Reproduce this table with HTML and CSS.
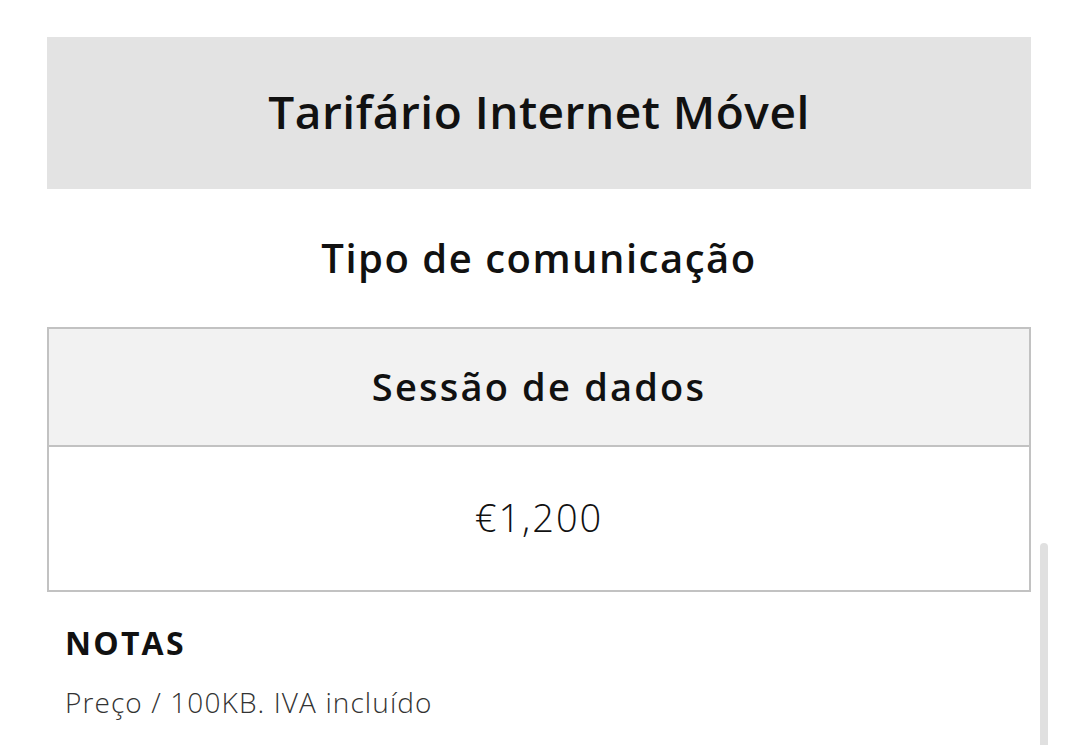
FILE: index.html
```html
<!DOCTYPE html>
<html lang="pt">
<head>
<meta charset="utf-8">
<title>Tarifário Internet Móvel</title>
<link rel="stylesheet" href="styles.css">
</head>
<body>
<main class="page">
  <header class="banner">
    <h1 class="banner-title">Tarifário Internet Móvel</h1>
  </header>
  <h2 class="section-title">Tipo de comunicação</h2>
  <table class="rates">
    <thead>
      <tr><th class="rates-head">Sessão de dados</th></tr>
    </thead>
    <tbody>
      <tr><td class="rates-cell">€1,200</td></tr>
    </tbody>
  </table>
  <section class="notes">
    <h3 class="notes-title">NOTAS</h3>
    <p class="notes-text">Preço / 100KB. IVA incluído</p>
  </section>
</main>
<div class="scrollbar"></div>
</body>
</html>
```

FILE: styles.css
```css
html, body {
  margin: 0;
  padding: 0;
  background: #ffffff;
  overflow: hidden;
}
body {
  font-family: "Open Sans", "Liberation Sans", sans-serif;
  color: #111111;
  height: 745px;
  position: relative;
}
.page {
  padding: 37px 49px 0 47px;
  display: flex;
  flex-direction: column;
}
.banner {
  background: #e3e3e3;
  height: 152px;
  display: flex;
  align-items: center;
  justify-content: center;
}
.banner-title {
  margin: 0 0 4px;
  font-size: 46px;
  font-weight: 600;
  letter-spacing: 0.5px;
  line-height: 1;
  color: #111;
}
.section-title {
  margin: 0;
  height: 138px;
  display: flex;
  align-items: center;
  justify-content: center;
  font-size: 40px;
  font-weight: 600;
  letter-spacing: 1.5px;
  line-height: 1;
  color: #111;
}
.rates {
  border-collapse: collapse;
  width: 100%;
  border: 2px solid #c2c2c2;
}
.rates-head {
  background: #f2f2f2;
  height: 113px;
  padding: 0 0 3px;
  font-size: 38px;
  font-weight: 600;
  letter-spacing: 2.2px;
  line-height: 1;
  text-align: center;
  border-bottom: 2px solid #c2c2c2;
  color: #111;
}
.rates-cell {
  height: 140px;
  padding: 0 0 3px;
  font-size: 38px;
  font-weight: 300;
  letter-spacing: 2px;
  line-height: 1;
  text-align: center;
  color: #111;
}
.notes {
  padding: 35px 18px 0;
}
.notes-title {
  margin: 0;
  font-size: 32px;
  font-weight: 700;
  letter-spacing: 2.2px;
  line-height: 1;
  color: #111;
}
.notes-text {
  margin: 29px 0 0;
  font-size: 28px;
  font-weight: 300;
  letter-spacing: 1.1px;
  line-height: 1;
  color: #333;
}
.scrollbar {
  position: absolute;
  left: 1040px;
  top: 543px;
  width: 8px;
  height: 210px;
  background: #e0e0e0;
  border-radius: 4px 4px 0 0;
}
```
